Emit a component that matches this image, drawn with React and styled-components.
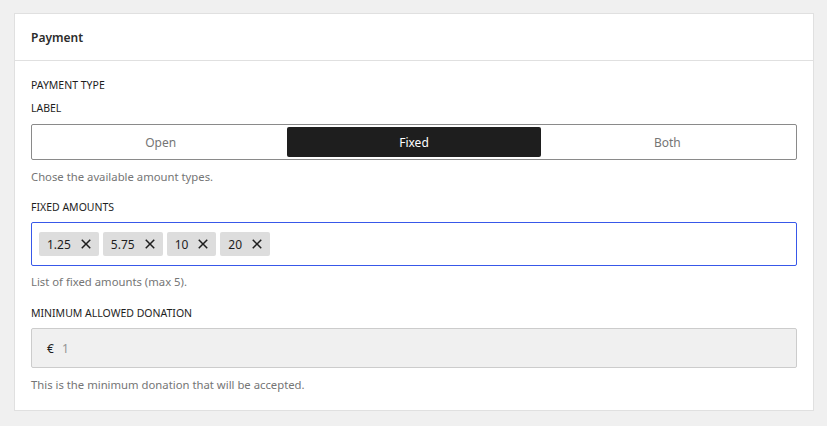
import React from "react";
import styled, { createGlobalStyle } from "styled-components";

const Global = createGlobalStyle`
  html, body { margin: 0; padding: 0; background: #f0f0f0; }
  body { font-family: "Noto Sans", "Open Sans", sans-serif; color: #1e1e1e; }
  * { box-sizing: border-box; }
`;

const Page = styled.div`
  padding: 13px 13px 15px 14px;
  width: 827px;
  min-height: 426px;
`;

const Card = styled.section`
  width: 800px;
  background: #fff;
  border: 1px solid #e0e0e0;
`;

const CardHeader = styled.header`
  height: 47px;
  padding: 0 16px;
  display: flex;
  align-items: center;
  border-bottom: 1px solid #e0e0e0;
  font-size: 12px;
  font-weight: 600;
  color: #2c2c2c;
`;

const CardBody = styled.div`
  padding: 16px 16px 16px;
  display: flex;
  flex-direction: column;
`;

const Label = styled.div`
  font-size: 10.5px;
  line-height: 16px;
  text-transform: uppercase;
  color: #1e1e1e;
  margin-top: ${(p) => p.$mt || 0}px;
  margin-bottom: ${(p) => p.$mb || 0}px;
`;

const Help = styled.p`
  margin: ${(p) => p.$mt || 8}px 0 0;
  font-size: 11.3px;
  line-height: 18px;
  color: #757575;
`;

const Segmented = styled.div`
  display: grid;
  grid-template-columns: repeat(3, 1fr);
  height: 36px;
  padding: 2px;
  border: 1px solid #8a8a8a;
  border-radius: 2px;
`;

const Segment = styled.button`
  border: none;
  border-radius: 2px;
  background: ${(p) => (p.$active ? "#1e1e1e" : "transparent")};
  color: ${(p) => (p.$active ? "#fff" : "#757575")};
  font-family: inherit;
  font-size: 12px;
  padding: 0;
  cursor: pointer;
`;

const TagsField = styled.div`
  height: 44px;
  border: 1px solid #3858e9;
  border-radius: 2px;
  padding: 0 7px;
  display: flex;
  align-items: center;
  gap: 4px;
`;

const Tag = styled.span`
  display: inline-flex;
  align-items: center;
  height: 24px;
  background: #ddd;
  border-radius: 2px;
  padding: 0 1px 0 8px;
  font-size: 12px;
  color: #1e1e1e;
`;

const TagText = styled.span`
  margin-right: 3px;
`;

const RemoveBtn = styled.button`
  width: 24px;
  height: 24px;
  padding: 0;
  border: none;
  background: transparent;
  display: inline-flex;
  align-items: center;
  justify-content: center;
  color: #1e1e1e;
`;

const MoneyField = styled.div`
  height: 40px;
  background: #f0f0f0;
  border: 1px solid #ccc;
  border-radius: 2px;
  display: flex;
  align-items: center;
  padding: 0 15px;
  gap: 8px;
  font-size: 12px;
`;

const Currency = styled.span`
  color: #1e1e1e;
`;

const Value = styled.span`
  color: #949494;
`;

const CloseIcon = () => (
  <svg width="24" height="24" viewBox="0 0 24 24" fill="currentColor" aria-hidden="true">
    <path d="M12 13.06l3.712 3.713 1.061-1.06L13.061 12l3.713-3.712-1.06-1.06L12 10.938 8.288 7.227l-1.061 1.06L10.939 12l-3.712 3.712 1.06 1.061L12 13.061z" />
  </svg>
);

const amounts = ["1.25", "5.75", "10", "20"];

export default function App() {
  return (
    <>
      <Global />
      <Page>
        <Card>
          <CardHeader>Payment</CardHeader>
          <CardBody>
            <Label>Payment type</Label>
            <Label $mt={7} $mb={8}>Label</Label>
            <Segmented>
              <Segment>Open</Segment>
              <Segment $active>Fixed</Segment>
              <Segment>Both</Segment>
            </Segmented>
            <Help>Chose the available amount types.</Help>
            <Label $mt={13} $mb={7}>Fixed amounts</Label>
            <TagsField>
              {amounts.map((a) => (
                <Tag key={a}>
                  <TagText>{a}</TagText>
                  <RemoveBtn aria-label={`Remove ${a}`}>
                    <CloseIcon />
                  </RemoveBtn>
                </Tag>
              ))}
            </TagsField>
            <Help $mt={7}>List of fixed amounts (max 5).</Help>
            <Label $mt={14} $mb={7}>Minimum allowed donation</Label>
            <MoneyField>
              <Currency>€</Currency>
              <Value>1</Value>
            </MoneyField>
            <Help $mt={8}>This is the minimum donation that will be accepted.</Help>
          </CardBody>
        </Card>
      </Page>
    </>
  );
}
